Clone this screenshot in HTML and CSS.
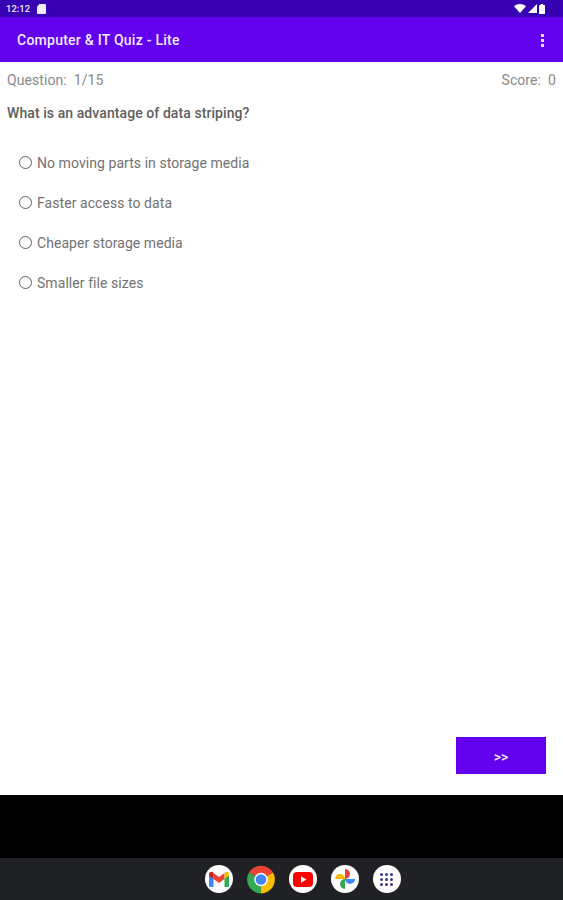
FILE: index.html
```html
<!DOCTYPE html>
<html lang="en">
<head>
    <meta charset="UTF-8">
    <meta name="viewport" content="width=device-width, initial-scale=1.0">
    <title>Computer &amp; IT Quiz - Lite</title>
    <link rel="stylesheet" href="styles.css">
</head>
<body>
    <div class="status-bar">
        <div class="status-left">
            <span class="clock">12:12</span>
            <svg width="9" height="10" viewBox="0 0 9 10"><path d="M2.5 0H8a1 1 0 0 1 1 1v8a1 1 0 0 1-1 1H1a1 1 0 0 1-1-1V2.5z" fill="#f1ecfb"/></svg>
        </div>
        <div class="status-right">
            <svg width="12" height="9" viewBox="0 0 12 9"><path d="M0 2.2C3.400-.7 8.600-.7 12 2.200L6 9z" fill="#fff"/></svg>
            <svg width="9" height="9" viewBox="0 0 9 9"><path d="M9 0v9H0z" fill="#fff"/></svg>
            <svg width="6" height="10" viewBox="0 0 6 10"><path d="M1.800 0h2.400v1H5.400a.6.600 0 0 1 .6.600V10H0V1.600A.6.600 0 0 1 .6 1h1.200z" fill="#fff"/></svg>
        </div>
    </div>

    <header class="app-bar">
        <h1>Computer &amp; IT Quiz - Lite</h1>
        <div class="menu-dots"><span></span><span></span><span></span></div>
    </header>

    <main class="quiz">
        <div class="quiz-head">
            <span>Question:&nbsp; 1/15</span>
            <span>Score:&nbsp; 0</span>
        </div>
        <p class="question">What is an advantage of data striping?</p>

        <ul class="options">
            <li><span class="radio"></span>No moving parts in storage media</li>
            <li><span class="radio"></span>Faster access to data</li>
            <li><span class="radio"></span>Cheaper storage media</li>
            <li><span class="radio"></span>Smaller file sizes</li>
        </ul>

        <div class="quiz-foot">
            <button type="button" class="next-btn">&gt;&gt;</button>
        </div>
    </main>

    <div class="black-band"></div>

    <nav class="dock">
        <div class="dock-icon">
            <svg width="20" height="16" viewBox="0 0 20 16">
                <path d="M0 3.500V14.500A1.500 1.500 0 0 0 1.500 16H4.500V7.500z" fill="#4285f4"/>
                <path d="M20 3.500V14.500A1.500 1.500 0 0 1 18.500 16H15.500V7.500z" fill="#34a853"/>
                <path d="M4.500 8L10 12 15.500 8V2L10 6 4.500 2z" fill="#ea4335"/>
                <path d="M0 3.500C0 1 2.800-.6 4.500 2V8L0 4.500z" fill="#c5221f"/>
                <path d="M20 3.500C20 1 17.200-.6 15.500 2V8L20 4.500z" fill="#fbbc04"/>
            </svg>
        </div>
        <div class="dock-icon dock-chrome">
            <svg width="29" height="29" viewBox="0 0 29 29">
                <path d="M14.500 14.500L2 7.300A14.500 14.500 0 0 1 27 7.300z" fill="#ea4335"/>
                <path d="M14.500 14.500L27 7.300A14.500 14.500 0 0 1 14.500 29z" fill="#fbbc04"/>
                <path d="M14.500 14.500V29A14.500 14.500 0 0 1 2 7.300z" fill="#34a853"/>
                <circle cx="14.500" cy="14.500" r="7" fill="#fff"/>
                <circle cx="14.500" cy="14.500" r="5.500" fill="#4285f4"/>
            </svg>
        </div>
        <div class="dock-icon">
            <svg width="20" height="15" viewBox="0 0 20 15">
                <rect width="20" height="15" rx="4" fill="#f00"/>
                <path d="M8 4.200L13.500 7.500 8 10.800z" fill="#fff"/>
            </svg>
        </div>
        <div class="dock-icon">
            <svg width="20" height="20" viewBox="0 0 20 20">
                <path d="M10 10H0A5 5 0 0 1 10 10z" fill="#fbbc04"/>
                <path d="M10 10V0A5 5 0 0 1 10 10z" fill="#ea4335"/>
                <path d="M10 10H20A5 5 0 0 1 10 10z" fill="#4285f4"/>
                <path d="M10 10V20A5 5 0 0 1 10 10z" fill="#34a853"/>
            </svg>
        </div>
        <div class="dock-icon">
            <div class="app-grid">
                <span></span><span></span><span></span>
                <span></span><span></span><span></span>
                <span></span><span></span><span></span>
            </div>
        </div>
    </nav>
</body>
</html>
```

FILE: styles.css
```css
html, body {
    margin: 0;
    padding: 0;
}
body {
    width: 563px;
    height: 900px;
    display: flex;
    flex-direction: column;
    font-family: Roboto, "Liberation Sans", sans-serif;
    background-color: #fff;
    overflow: hidden;
}
.status-bar {
    height: 17px;
    flex: none;
    display: flex;
    align-items: center;
    justify-content: space-between;
    padding: 0 18px 0 6px;
    background-color: #3700b3;
    color: #f1ecfb;
}
.status-left, .status-right {
    display: flex;
    align-items: center;
}
.status-left {
    gap: 7px;
}
.status-right {
    gap: 2px;
}
.clock {
    font-size: 9.500px;
    font-weight: 500;
}
.app-bar {
    height: 45px;
    flex: none;
    display: flex;
    align-items: center;
    justify-content: space-between;
    padding: 1px 19px 0 17px;
    background-color: #6200ee;
    box-sizing: border-box;
}
.app-bar h1 {
    margin: 0;
    font-size: 14px;
    font-weight: 500;
    letter-spacing: 0.25px;
    color: #f3ebff;
}
.menu-dots {
    display: flex;
    flex-direction: column;
    gap: 2px;
}
.menu-dots span {
    width: 3px;
    height: 3px;
    background-color: #eadcff;
}
.quiz {
    flex: 1;
    display: flex;
    flex-direction: column;
    padding: 10px 7px 21px;
}
.quiz-head {
    display: flex;
    justify-content: space-between;
    font-size: 14px;
    line-height: 16px;
    letter-spacing: 0.07px;
    color: #8a8a8a;
}
.question {
    margin: 17px 0 0;
    font-size: 14px;
    line-height: 16px;
    font-weight: 500;
    letter-spacing: 0.08px;
    color: #5e5e5e;
}
.options {
    list-style: none;
    margin: 22px 0 0;
    padding: 0 0 0 12px;
    flex: 1;
}
.options li {
    height: 40px;
    display: flex;
    align-items: center;
    gap: 5px;
    font-size: 14px;
    letter-spacing: 0.06px;
    color: #727272;
}
.radio {
    width: 11px;
    height: 11px;
    margin-top: -2px;
    border: 1.500px solid #5f5f5f;
    border-radius: 50%;
}
.quiz-foot {
    display: flex;
    justify-content: flex-end;
    padding-right: 10px;
}
.next-btn {
    width: 90px;
    height: 37px;
    border: none;
    padding: 3px 0 0;
    background-color: #6200ee;
    color: #f3ebff;
    font-family: inherit;
    font-size: 14px;
    font-weight: 500;
}
.black-band {
    height: 63px;
    flex: none;
    background-color: #000;
}
.dock {
    height: 42px;
    flex: none;
    display: flex;
    align-items: center;
    justify-content: center;
    gap: 14px;
    padding-left: 42px;
    background-color: #202124;
}
.dock-icon {
    width: 28px;
    height: 28px;
    display: flex;
    align-items: center;
    justify-content: center;
    border-radius: 50%;
    background-color: #fff;
}
.dock-chrome {
    background-color: transparent;
}
.app-grid {
    display: grid;
    grid-template-columns: repeat(3, 3px);
    gap: 2px;
}
.app-grid span {
    width: 3px;
    height: 3px;
    border-radius: 50%;
    background-color: #3c3a8f;
}
```
